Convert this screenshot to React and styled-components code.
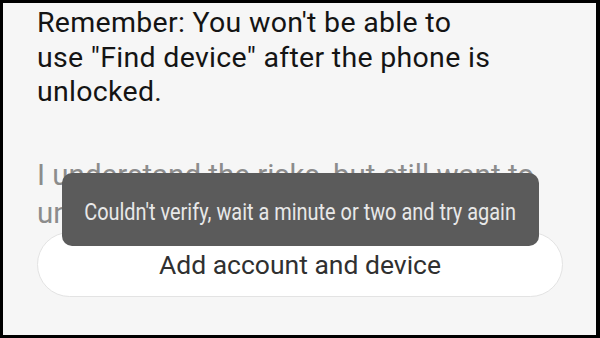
import React from "react";
import styled, { createGlobalStyle } from "styled-components";

const Global = createGlobalStyle`
  html, body { margin: 0; padding: 0; background: #000; }
  body { width: 600px; height: 338px; overflow: hidden; font-family: Roboto, "Noto Sans", sans-serif; }
  #root { width: 600px; height: 338px; }
`;

const Frame = styled.div`
  position: relative;
  box-sizing: border-box;
  margin: 3px 4px 3px 3px;
  width: 593px;
  height: 332px;
  background: #f6f6f6;
  padding: 3px 30px 0 34px;
  display: flex;
  flex-direction: column;
`;

const Notice = styled.p`
  margin: 0;
  max-width: 458px;
  font-size: 28.5px;
  line-height: 34.5px;
  color: #141414;
  letter-spacing: 0.3px;
`;

const Risk = styled.p`
  margin: 46px 0 0;
  font-size: 29.5px;
  line-height: 38px;
  color: #8c8c8c;
  white-space: nowrap;
`;

const PillButton = styled.button`
  margin-top: 0;
  width: 526px;
  height: 65px;
  flex-shrink: 0;
  border-radius: 33px;
  background: #ffffff;
  border: 1px solid #e3e3e3;
  font-family: Roboto, "Noto Sans", sans-serif;
  font-size: 26.5px;
  color: #303030;
  display: flex;
  align-items: center;
  justify-content: center;
  padding: 0;
`;

const Toast = styled.div`
  position: absolute;
  left: 59px;
  top: 170px;
  width: 477px;
  height: 73px;
  border-radius: 10px;
  background: #5b5b5b;
  display: flex;
  align-items: center;
  justify-content: center;
`;

const ToastText = styled.span`
  display: inline-block;
  white-space: nowrap;
  font-size: 24px;
  color: #e8e8e8;
  transform: scaleX(0.83);
  margin-top: 4px;
`;

export default function App() {
  return (
    <>
      <Global />
      <Frame>
        <Notice>
          Remember: You won't be able to use "Find device" after the phone is unlocked.
        </Notice>
        <Risk>
          I understand the risks, but still want to
          <br />
          unlock this phone.
        </Risk>
        <PillButton>Add account and device</PillButton>
        <Toast>
          <ToastText>Couldn't verify, wait a minute or two and try again</ToastText>
        </Toast>
      </Frame>
    </>
  );
}
